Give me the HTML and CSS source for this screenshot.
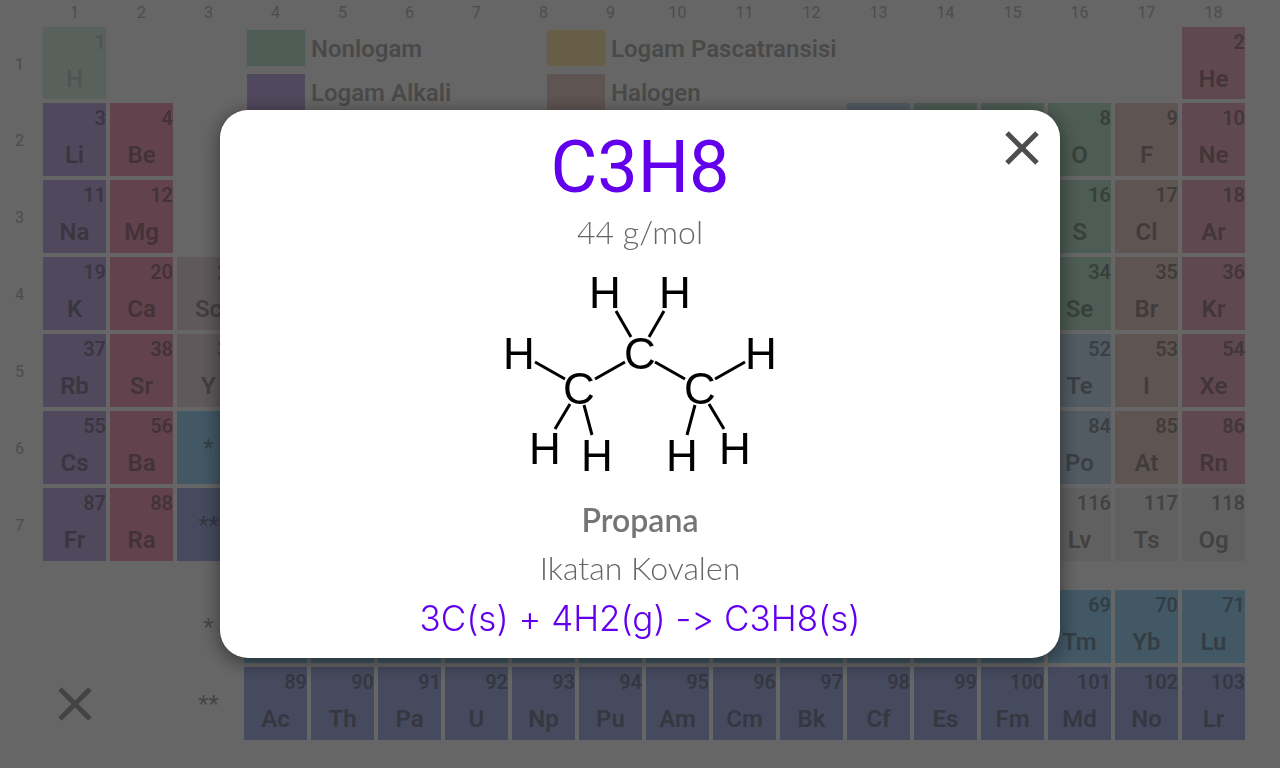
FILE: index.html
```html
<!DOCTYPE html>
<html lang="id">
<head>
<meta charset="utf-8">
<title>Tabel Periodik</title>
<link rel="stylesheet" href="styles.css">
</head>
<body>
<main class="table" id="table">
  <ul class="legend">
    <li><span class="swatch nonmetal"></span>Nonlogam</li>
    <li><span class="swatch post"></span>Logam Pascatransisi</li>
    <li><span class="swatch alkali"></span>Logam Alkali</li>
    <li><span class="swatch halogen"></span>Halogen</li>
  </ul>
  <button class="icon-button clear" aria-label="Hapus"><svg class="cross" viewBox="0 0 34 34"><path d="M2 2L32 32M32 2L2 32"/></svg></button>
</main>
<div class="overlay">
  <section class="dialog" role="dialog" aria-labelledby="formula">
    <button class="icon-button close" aria-label="Tutup"><svg class="cross" viewBox="0 0 34 34"><path d="M2 2L32 32M32 2L2 32"/></svg></button>
    <h1 class="formula" id="formula">C3H8</h1>
    <p class="detail">44 g/mol</p>
    <svg class="molecule" viewBox="0 -2 300 240" role="img" aria-label="Propana">
      <path d="M126 51L141 77M174 51L159 77M45 102L75 119M105 119L135 102M165 102L195 119M225 119L255 102M80 144L65 169M94 145L102 175M205 145L197 175M219 144L234 169"/>
      <text x="115" y="48">H</text><text x="185" y="48">H</text>
      <text x="29" y="109">H</text><text x="271" y="109">H</text>
      <text x="150" y="109">C</text>
      <text x="89" y="144">C</text><text x="210" y="144">C</text>
      <text x="55" y="204">H</text><text x="107" y="211">H</text>
      <text x="192" y="211">H</text><text x="245" y="204">H</text>
    </svg>
    <p class="detail name">Propana</p>
    <p class="detail">Ikatan Kovalen</p>
    <p class="equation">3C(s) + 4H2(g) -&gt; C3H8(s)</p>
  </section>
</div>
<script src="table.js"></script>
</body>
</html>
```

FILE: table.js
```js
const table = document.getElementById("table");

function add(className, row, column, html) {
  const el = document.createElement("div");
  el.className = className;
  el.style.gridArea = row + " / " + column;
  el.innerHTML = html;
  table.append(el);
}

for (let g = 1; g <= 18; g++) add("label", 1, g + 1, g);
for (let p = 1; p <= 7; p++) add("label", p + 1, 1, p);

// kind, grid row, first group, first atomic number, symbols ("-" is a blank tile)
const runs = [
  ["nonmetal faded", 2, 1, 1, "H"], ["noble", 2, 18, 2, "He"],
  ["alkali", 3, 1, 3, "Li"], ["earth", 3, 2, 4, "Be"],
  ["metalloid", 3, 13, 5, "-"], ["nonmetal", 3, 14, 6, "- - O"],
  ["halogen", 3, 17, 9, "F"], ["noble", 3, 18, 10, "Ne"],
  ["alkali", 4, 1, 11, "Na"], ["earth", 4, 2, 12, "Mg"],
  ["nonmetal", 4, 16, 16, "S"], ["halogen", 4, 17, 17, "Cl"], ["noble", 4, 18, 18, "Ar"],
  ["alkali", 5, 1, 19, "K"], ["earth", 5, 2, 20, "Ca"], ["transition", 5, 3, 21, "Sc"],
  ["nonmetal", 5, 16, 34, "Se"], ["halogen", 5, 17, 35, "Br"], ["noble", 5, 18, 36, "Kr"],
  ["alkali", 6, 1, 37, "Rb"], ["earth", 6, 2, 38, "Sr"], ["transition", 6, 3, 39, "Y"],
  ["metalloid", 6, 16, 52, "Te"], ["halogen", 6, 17, 53, "I"], ["noble", 6, 18, 54, "Xe"],
  ["alkali", 7, 1, 55, "Cs"], ["earth", 7, 2, 56, "Ba"],
  ["metalloid", 7, 16, 84, "Po"], ["halogen", 7, 17, 85, "At"], ["noble", 7, 18, 86, "Rn"],
  ["alkali", 8, 1, 87, "Fr"], ["earth", 8, 2, 88, "Ra"],
  ["unknown", 8, 16, 116, "Lv Ts Og"],
  ["lanthanide", 10, 4, 57, "- - - - - - - - - - - - Tm Yb Lu"],
  ["actinide", 11, 4, 89, "Ac Th Pa U Np Pu Am Cm Bk Cf Es Fm Md No Lr"]
];

for (const [kind, row, group, first, symbols] of runs) {
  symbols.split(" ").forEach((symbol, i) => {
    const content = symbol === "-" ? "" :
      `<span class="number">${first + i}</span><span class="symbol">${symbol}</span>`;
    add("cell " + kind, row, group + i + 1, content);
  });
}

add("mark lanthanide", 7, 4, "*");
add("mark actinide", 8, 4, "**");
add("mark", 10, 4, "*");
add("mark", 11, 4, "**");
```

FILE: styles.css
```css
* { box-sizing: border-box; }

body {
  margin: 0;
  background: #fff;
  font-family: Roboto, "Liberation Sans", sans-serif;
  overflow: hidden;
}

.table {
  display: grid;
  grid-template-columns: 39px repeat(18, minmax(0, 1fr));
  grid-template-rows: 23px 72px repeat(6, 73px) 21px repeat(2, 73px);
  gap: 4px;
  padding-right: 35px;
  color: rgba(90, 90, 90, 0.45);
  min-height: 100vh;
}

.label {
  display: grid;
  place-items: center;
  padding-top: 2px;
  font-size: 16px;
  font-weight: 400;
  color: #c0c0c0;
}

.cell {
  display: flex;
  flex-direction: column;
  font-weight: 600;
  color: rgba(90, 90, 90, 0.5);
}
.number { font-size: 20px; line-height: 30px; text-align: right; }
.symbol { font-size: 24px; line-height: 44px; text-align: center; }
.faded { opacity: 0.45; }

.mark {
  display: grid;
  place-items: center;
  font-size: 24px;
  color: rgba(90, 90, 90, 0.5);
}

.nonmetal { background: #c0e6d2; }
.alkali { background: #c8b4e6; }
.earth { background: #f4a8c0; }
.noble { background: #f0b4c8; }
.halogen { background: #ebd2cd; }
.post { background: #ffebb2; }
.metalloid { background: #cde1f5; }
.transition { background: #eddee6; }
.lanthanide { background: #a5dcfc; }
.actinide { background: #afb9eb; }
.unknown { background: #f0f0f0; }

.faded.nonmetal { background: #b4e6c8; }

.legend {
  grid-area: 2 / 5 / 4 / 14;
  display: grid;
  grid-template-columns: repeat(2, 300px);
  grid-auto-rows: 36px;
  gap: 8px 0;
  margin: 0;
  padding: 3px;
  list-style: none;
  font-size: 24px;
  line-height: 38px;
  font-weight: 600;
}
.legend li { display: flex; align-items: flex-start; gap: 6px; white-space: nowrap; }
.swatch { width: 58px; height: 36px; }

.icon-button {
  display: grid;
  place-items: center;
  width: 44px;
  height: 44px;
  padding: 0;
  border: 0;
  background: none;
  cursor: pointer;
}
.cross { width: 34px; height: 34px; overflow: visible; fill: none; stroke: #4d4d4d; stroke-width: 5; }
.clear { grid-area: 11 / 2; place-self: center; }
.clear .cross { stroke: #a8a8a8; }

.overlay {
  position: fixed;
  inset: 0;
  display: flex;
  align-items: center;
  justify-content: center;
  background: rgba(0, 0, 0, 0.6);
}

.dialog {
  position: relative;
  display: flex;
  flex-direction: column;
  align-items: center;
  width: 100%;
  max-width: 840px;
  padding: 16px 0;
  border-radius: 28px;
  background: #fff;
  box-shadow: 0 4px 20px rgba(0, 0, 0, 0.5);
}
.close { position: absolute; top: 16px; right: 16px; }

.formula { margin: 0; font-size: 72px; line-height: 84px; font-weight: 400; color: #6200ee; }
.detail { margin: 0 0 4px; font-family: Lato, sans-serif; font-size: 32px; line-height: 44px; font-weight: 300; color: #666; }
.name { font-weight: 600; color: #757575; }
.equation { margin: 0; font-family: Inter, sans-serif; font-size: 35px; line-height: 48px; font-weight: 300; font-variant-ligatures: none; font-feature-settings: "calt" 0; color: #6200ee; }

.molecule { width: 300px; height: 240px; fill: #000; font-family: "Liberation Sans", sans-serif; font-size: 44px; text-anchor: middle; }
.molecule path { fill: none; stroke: #000; stroke-width: 3; }
```
